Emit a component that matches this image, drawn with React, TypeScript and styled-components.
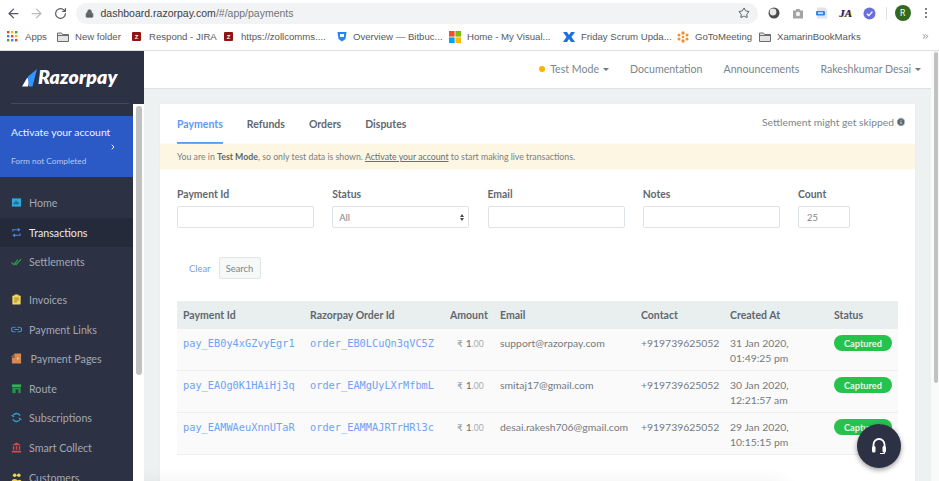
import React from "react";
import styled, { createGlobalStyle } from "styled-components";
import { ArrowLeft, ArrowRight, RotateCw, Lock, Star, ChevronRight, ChevronsRight, Info } from "lucide-react";

const Global = createGlobalStyle`
  html, body { margin: 0; padding: 0; background: #fff; overflow: hidden; }
  * { box-sizing: border-box; }
`;

const Page = styled.div`
  width: 939px; height: 481px; overflow: hidden; position: relative;
  display: flex; flex-direction: column; font-family: Lato, "Liberation Sans", sans-serif;
`;

/* ---------- browser chrome ---------- */
const Toolbar = styled.div`
  height: 25px; flex: none; display: flex; align-items: center; padding: 1px 0 0 5px; background: #fff; color: #5f6368;
`;
const NavBtn = styled.span<{ $faded?: boolean }>`
  width: 16px; height: 16px; margin-right: 7.5px; display: flex; align-items: center; justify-content: center;
  color: ${(p) => (p.$faded ? "#b8bbbf" : "#555a5f")};
`;
const UrlPill = styled.div`
  width: 682px; height: 21px; margin: 0 4px 0 0; border-radius: 11px; background: #f1f3f4;
  display: flex; align-items: center; padding: 0 8px 0 9px; font: 10.5px/1 "Liberation Sans", sans-serif;
`;
const UrlHost = styled.span`color: #3c4043; margin-left: 7px;`;
const UrlPath = styled.span`color: #70757a; flex: 1;`;
const Ext = styled.span`
  width: 24px; height: 16px; flex: none; display: flex; align-items: center; justify-content: center;
`;
const ExtText = styled.span`
  font: italic 900 11px/1 "Liberation Serif", serif; color: #1c1a8c; text-shadow: 1px 0 0 #d7b500;
`;
const Sep = styled.span`width: 1px; height: 13px; background: #dfe1e5; margin: 0 7px 0 4px;`;
const Avatar = styled.span`
  width: 16px; height: 16px; border-radius: 50%; background: #33691e; color: #fff; margin-left: 1px;
  display: flex; align-items: center; justify-content: center; font: 8.5px Roboto, sans-serif;
`;
const Dots = styled.span`
  margin-left: 14px; width: 2px; height: 10px; display: flex; flex-direction: column; justify-content: space-between;
  & i { display: block; width: 2px; height: 2px; border-radius: 50%; background: #555a5f; }
`;
const Bookmarks = styled.div`
  height: 26px; flex: none; display: flex; align-items: center; padding: 0 0 2px 7px; background: #fff;
  border-bottom: 1px solid #dcdddf; font: 9.6px/1 "Liberation Sans", sans-serif; color: #55595e;
`;
const Mark = styled.span<{ $w: number }>`
  width: ${(p) => p.$w}px; flex: none; display: flex; align-items: center; gap: 6px; white-space: nowrap;
`;
const AppsLabel = styled.span`margin-left: 1px;`;
const ZBadge = styled.span`
  width: 9px; height: 9px; margin-right: 2px; background: #8f1414; color: #fff; border-radius: 1px; flex: none;
  display: flex; align-items: center; justify-content: center; font: bold 6px "Liberation Sans", sans-serif;
`;
const More = styled.span`margin-left: auto; margin-right: 9px; color: #5f6368; display: flex;`;

/* ---------- app body ---------- */
const Body = styled.div`flex: 1; min-height: 0; display: flex; background: #eef1f2; position: relative;`;
const Sidebar = styled.aside`
  width: 144px; flex: none; display: flex; flex-direction: column; background: #fff; position: relative; z-index: 2;
`;
const LogoBlock = styled.div`
  height: 53px; flex: none; background: #2c3144; padding: 16px 11px 0; display: flex; flex-direction: column;
`;
const LogoRow = styled.div`display: flex; align-items: flex-end; padding-left: 11px; height: 20px; gap: 1px; color: #fff;`;
const LogoText = styled.span`font: italic 800 19.5px/20px Lato, sans-serif; letter-spacing: .1px;`;
const LogoRule = styled.div`width: 118px; height: 1px; margin-top: 16px; background: #444a5e;`;
const SideRow = styled.div`flex: 1; min-height: 0; display: flex;`;
const SideNav = styled.nav`width: 133px; flex: none; background: #2c3144; padding-top: 12px; overflow: hidden;`;
const Activate = styled.div`
  height: 61px; background: #2b5ac6; padding: 9px 11px 0; display: flex; flex-direction: column; color: #fff;
`;
const ActivateTitle = styled.div`font-size: 10.4px; line-height: 14px; color: #eef2fb;`;
const ActivateArrow = styled.div`height: 15px; display: flex; justify-content: flex-end; align-items: center; padding-right: 5px;`;
const ActivateSub = styled.div`font-size: 8.3px; line-height: 12px; margin-top: 1px; color: #b7c8ef;`;
const NavList = styled.div`padding-top: 11px;`;
const NavItem = styled.div<{ $active?: boolean; $gap?: boolean; $nudge?: boolean }>`
  height: 29.6px; display: flex; align-items: center; padding-left: 11px; gap: ${(p) => (p.$nudge ? 8.5 : 7)}px;
  margin-top: ${(p) => (p.$gap ? 8 : 0)}px;
  background: ${(p) => (p.$active ? "#252a3b" : "transparent")};
  color: ${(p) => (p.$active ? "#e8eaee" : "#a3a8b3")}; font-size: 10.7px; white-space: nowrap;
`;
const SideScroll = styled.div`width: 11px; flex: none; background: #fff; padding: 2px 2px 0 3px;`;
const Thumb = styled.div<{ $h: number }>`width: 100%; height: ${(p) => p.$h}px; border-radius: 4px; background: #c1c1c1;`;

const Main = styled.main`flex: 1; min-width: 0; display: flex; flex-direction: column;`;
const TopBar = styled.header`
  height: 37px; flex: none; background: #fff; box-shadow: 0 1px 1px #dfe2e5; display: flex; align-items: center;
  justify-content: flex-end; gap: 21px; padding: 0 10px 1px 0; font-size: 10.6px; color: #7b858b;
`;
const TopItem = styled.span`display: flex; align-items: center; gap: 4px; white-space: nowrap;`;
const Dot = styled.span`width: 6px; height: 6px; border-radius: 50%; background: #ffb300; margin-right: 1px;`;
const Caret = styled.span`width: 0; height: 0; border: 3px solid transparent; border-top: 3px solid #6b757b; border-bottom: 0;`;
const Card = styled.section`
  margin: 16px 16px 0; background: #fff; box-shadow: 0 0 1px #dfe2e5; flex: 1; display: flex; flex-direction: column; min-height: 0;
`;
const TabBar = styled.div`height: 40px; flex: none; display: flex; padding: 0 9px 0 17px; justify-content: space-between;`;
const Tabs = styled.div`display: flex; gap: 24px;`;
const Tab = styled.div<{ $active?: boolean }>`
  height: 40px; display: flex; align-items: center; font-size: 10.5px; font-weight: 700; padding-top: 1px;
  color: ${(p) => (p.$active ? "#5c9af5" : "#5f686f")};
  border-bottom: 2px solid ${(p) => (p.$active ? "#5c9af5" : "transparent")};
`;
const Skip = styled.div`display: flex; align-items: center; gap: 2px; font-size: 10.3px; color: #7b858b; padding-bottom: 4px;`;
const Notice = styled.div`
  height: 25px; flex: none; background: #fdf6e3; display: flex; align-items: center; padding-left: 17px;
  font-size: 8.76px; color: #7c7f7d; box-shadow: 0 0 1px #e6e3d2;
  & b { color: #5f686f; } & u { color: #6a6f70; } & span { white-space: pre; }
`;
const Form = styled.div`display: flex; gap: 18.25px; padding: 19px 0 0 17px;`;
const Field = styled.label<{ $w: number }>`width: ${(p) => p.$w}px; display: flex; flex-direction: column; flex: none;`;
const FieldLabel = styled.span`font-size: 10.4px; font-weight: 700; color: #5f686f; line-height: 13px; margin-bottom: 5px;`;
const Input = styled.div<{ $inset?: number }>`
  height: 22px; border: 1px solid #dde3e6; border-radius: 2px; background: #fff; display: flex; align-items: center;
  justify-content: space-between; padding: 0 4px 0 ${(p) => p.$inset ?? 6}px; font-size: 9.4px; color: #7b858b;
`;
const SelectArrows = styled.span`
  display: flex; flex-direction: column; gap: 1px;
  & i { display: block; width: 0; height: 0; border: 2.2px solid transparent; }
  & i:first-child { border-top: 0; border-bottom: 3px solid #44494d; }
  & i:last-child { border-bottom: 0; border-top: 3px solid #44494d; }
`;
const Actions = styled.div`display: flex; align-items: center; gap: 8px; padding: 29px 0 0 29px;`;
const ClearLink = styled.span`font-size: 9.4px; color: #6ea3f5;`;
const SearchBtn = styled.span`
  width: 42px; height: 22px; display: flex; align-items: center; justify-content: center; background: #f7f8f8;
  border: 1px solid #e2e6e8; border-radius: 2px; font-size: 9.4px; color: #7b858b;
`;
const Table = styled.div`margin: 22px 17px 0; display: flex; flex-direction: column;`;
const Row = styled.div<{ $head?: boolean }>`
  display: grid; grid-template-columns: 127px 140px 50px 141px 89px 104px 70px; height: ${(p) => (p.$head ? 28 : 42)}px;
  background: ${(p) => (p.$head ? "#e9eeef" : "#fafafa")};
  border-bottom: ${(p) => (p.$head ? "0" : "1px solid #eceeef")};
  font-size: ${(p) => (p.$head ? "10.5px" : "10.4px")};
  color: ${(p) => (p.$head ? "#5f686f" : "#73797e")};
  font-weight: ${(p) => (p.$head ? 700 : 400)};
  align-items: ${(p) => (p.$head ? "center" : "start")};
  padding-top: ${(p) => (p.$head ? 0 : 7)}px;
`;
const Cell = styled.div`padding-left: 6px; line-height: 15px; white-space: nowrap;`;
const MonoCell = styled(Cell)`font: 10.3px/15px "DejaVu Sans Mono", monospace; color: #6ea2f6;`;
const AmountCell = styled(Cell)`padding-left: 13px; color: #6b7176;`;
const Rupee = styled.span`font-family: "DejaVu Sans", sans-serif; font-size: 9px; color: #8a9095; margin-right: 3px;`;
const Cents = styled.span`font-size: 8.5px; color: #a4a9ad;`;
const Badge = styled.span`
  width: 58px; height: 16px; border-radius: 8px; background: #27c24c; color: #e4f8e9; margin: -1px 0 0 6px;
  display: flex; align-items: center; justify-content: center; font-size: 9.2px; font-weight: 700;
`;
const RightScroll = styled.div`width: 8px; flex: none; background: #fafafa; padding: 1px 1px 0 3px;`;
const BottomGlow = styled.div`
  position: absolute; left: 120px; width: 660px; top: 441px; height: 40px; z-index: 1;
  box-shadow: 0 0 22px 4px rgba(0, 0, 0, .12);
`;
const Chat = styled.div`
  position: absolute; left: 857px; top: 424px; width: 44px; height: 44px; border-radius: 50%; background: #2c3144;
  display: flex; align-items: center; justify-content: center; color: #fff; z-index: 3;
  box-shadow: 0 2px 5px rgba(0, 0, 0, .4);
`;
const NavIcon = styled.svg`flex: none;`;

const I = ({ children }: { children: React.ReactNode }) => (
  <NavIcon width="11" height="11" viewBox="0 0 12 12">{children}</NavIcon>
);

const navItems: [string, React.ReactNode, boolean?, boolean?, boolean?][] = [
  ["Home", <I><rect x="1" y="1.5" width="10" height="9" fill="#2fa8dc" /><path d="M3.5 8V6M5.5 8V4M7.5 8V5.5" stroke="#173a52" strokeWidth="1" /></I>],
  ["Transactions", <I><path d="M2 5V3h7M7.5 1.5 9.5 3l-2 1.5M10 7v2H3M4.5 7.5 2.5 9l2 1.5" stroke="#4d84e0" strokeWidth="1.2" fill="none" /></I>, true],
  ["Settlements", <I><path d="M0.5 7 3 9.5 7.5 4M4.5 8.5 5.5 9.5 11 3.5" stroke="#25a54a" strokeWidth="1.2" fill="none" /></I>],
  ["Invoices", <I><rect x="1.5" y="1.5" width="9" height="10" rx="1" fill="#f2d75c" /><path d="M3.5 4.5h5M3.5 6.5h5M3.5 8.5h3" stroke="#7a6a20" strokeWidth=".8" /><rect x="4" y=".5" width="4" height="2" fill="#f2d75c" /></I>, false, true],
  ["Payment Links", <I><path d="M5 3.5H3a2.5 2.5 0 0 0 0 5h2M7 3.5h2a2.5 2.5 0 0 1 0 5H7M3.5 6h5" stroke="#4d84e0" strokeWidth="1.2" fill="none" /></I>],
  ["Payment Pages", <I><path d="M4 .5h7v11H1V3.5z" fill="#d68a52" /><path d="M1 3.5 4 .5v5H1z" fill="#8d5f42" /><circle cx="7.5" cy="6" r="1" fill="#fff" opacity=".6" /></I>, false, false, true],
  ["Route", <I><path d="M1 1.5h10v3H1z" fill="#2cb457" /><path d="M1.5 5h9v6h-9z" fill="#1d9a47" /><rect x="5" y="7" width="3" height="4" fill="#2c3144" /></I>],
  ["Subscriptions", <I><path d="M10 4A4.5 4.5 0 0 0 2.2 3.8M2 8a4.500 4.500 0 0 0 7.800.2" stroke="#2f9fd0" strokeWidth="1.4" fill="none" /><path d="M.5 3.500 3.500 5.500M11.500 8.500 8.500 6.500" stroke="#2f9fd0" strokeWidth="1.2" /></I>],
  ["Smart Collect", <I><path d="M6 .5 11 3.5H1z" fill="#e0464c" /><path d="M2 4.500h1.500v4H2zM5.200 4.500h1.600v4H5.200zM8.500 4.500H10v4H8.500zM1 9.500h10v2H1z" fill="#e0464c" /></I>],
  ["Customers", <I><circle cx="4" cy="3.500" r="2" fill="#f0d44a" /><circle cx="8.500" cy="3.500" r="2" fill="#f0d44a" /><path d="M.5 11a3.500 3.500 0 0 1 7 0zM6 11a3 3 0 0 1 5.500-1v1z" fill="#f0d44a" /></I>],
];

const rows = [
  ["pay_EB0y4xGZvyEgr1", "order_EB0LCuQn3qVC5Z", "support@razorpay.com", "31 Jan 2020,", "01:49:25 pm"],
  ["pay_EAOg0K1HAiHj3q", "order_EAMgUyLXrMfbmL", "smitaj17@gmail.com", "30 Jan 2020,", "12:21:57 am"],
  ["pay_EAMWAeuXnnUTaR", "order_EAMMAJRTrHRl3c", "desai.rakesh706@gmail.com", "29 Jan 2020,", "10:15:15 pm"],
];

const Folder = () => (
  <svg width="12" height="10" viewBox="0 0 12 10"><path d="M.5 1h4l1 1.500h6V9.500H.5z" fill="#e4e4e4" stroke="#6d6d6d" /><path d="M.5 3.500h11" stroke="#6d6d6d" /></svg>
);

export default function App() {
  return (
    <Page>
      <Global />
      <Toolbar>
        <NavBtn><ArrowLeft size={15} /></NavBtn>
        <NavBtn $faded><ArrowRight size={15} /></NavBtn>
        <NavBtn><RotateCw size={13} strokeWidth={2.2} /></NavBtn>
        <UrlPill>
          <Lock size={9} fill="#5f6368" color="#5f6368" />
          <UrlHost>dashboard.razorpay.com</UrlHost>
          <UrlPath>/#/app/payments</UrlPath>
          <Star size={12} color="#555a5f" />
        </UrlPill>
        <Ext>
          <svg width="12" height="12" viewBox="0 0 12 12"><circle cx="6" cy="6" r="5.500" fill="#4a4a4a" /><circle cx="5" cy="5" r="3.400" fill="#e8e8e8" /></svg>
        </Ext>
        <Ext>
          <svg width="12" height="11" viewBox="0 0 12 11"><path d="M1 2.500h2.500L4.500 1h3l1 1.500H11v8H1z" fill="#a3a3a3" /><circle cx="6" cy="6" r="2.200" fill="#f2f2f2" /></svg>
        </Ext>
        <Ext>
          <svg width="13" height="12" viewBox="0 0 13 12"><path d="M2 .5h8l2 2v9H2z" fill="#dbe5f5" /><rect x="1" y="4" width="9" height="4.500" rx="1" fill="#3b82dc" /><rect x="3" y="5.300" width="5" height="1.600" fill="#dbe9fb" /></svg>
        </Ext>
        <Ext><ExtText>JA</ExtText></Ext>
        <Ext>
          <svg width="13" height="13" viewBox="0 0 13 13"><circle cx="6.500" cy="6.500" r="6" fill="#6b6fd8" /><path d="M3.800 6.800 5.800 8.600 9.400 4.600" stroke="#fff" strokeWidth="1.300" fill="none" /></svg>
        </Ext>
        <Sep />
        <Avatar>R</Avatar>
        <Dots><i /><i /><i /></Dots>
      </Toolbar>
      <Bookmarks>
        <Mark $w={50}>
          <svg width="11" height="11" viewBox="0 0 11 11">
            {[0, 1, 2].flatMap((r) => [0, 1, 2].map((c) => (
              <rect key={`${r}${c}`} x={c * 4} y={r * 4} width="2.400" height="2.400"
                fill={["#e94235", "#fbbc04", "#34a853", "#4285f4", "#e94235", "#fbbc04", "#34a853", "#4285f4", "#e94235"][r * 3 + c]} />
            )))}
          </svg>
          <AppsLabel>Apps</AppsLabel>
        </Mark>
        <Mark $w={75}><Folder />New folder</Mark>
        <Mark $w={92}><ZBadge>Z</ZBadge>Respond - JIRA</Mark>
        <Mark $w={113}><ZBadge>Z</ZBadge>https://zollcomms....</Mark>
        <Mark $w={112}>
          <svg width="10" height="11" viewBox="0 0 10 11"><path d="M.5 1h9l-1 7L5 10.500 1.500 8z" fill="#2684ff" /><rect x="3" y="3" width="4" height="3" fill="#fff" /></svg>
          Overview — Bitbuc...
        </Mark>
        <Mark $w={114}>
          <svg width="12" height="12" viewBox="0 0 12 12"><rect width="5.600" height="5.600" fill="#f25022" /><rect x="6.400" width="5.600" height="5.600" fill="#7fba00" /><rect y="6.400" width="5.600" height="5.600" fill="#00a4ef" /><rect x="6.400" y="6.400" width="5.600" height="5.600" fill="#ffb900" /></svg>
          Home - My Visual...
        </Mark>
        <Mark $w={114}>
          <svg width="12" height="12" viewBox="0 0 12 12"><path d="M0 1h4l2 3 2-3h4L8.500 6 12 11H8L6 8l-2 3H0l3.500-5z" fill="#1f6fe0" /></svg>
          Friday Scrum Upda...
        </Mark>
        <Mark $w={82}>
          <svg width="12" height="12" viewBox="0 0 12 12" fill="#f68d2e"><circle cx="6" cy="2" r="1.700" /><circle cx="6" cy="10" r="1.700" /><circle cx="2" cy="4" r="1.500" /><circle cx="10" cy="4" r="1.500" /><circle cx="2" cy="8" r="1.500" /><circle cx="10" cy="8" r="1.500" /><circle cx="6" cy="6" r="1.200" /></svg>
          GoToMeeting
        </Mark>
        <Mark $w={110}><Folder />XamarinBookMarks</Mark>
        <More><ChevronsRight size={9} /></More>
      </Bookmarks>
      <Body>
        <Sidebar>
          <LogoBlock>
            <LogoRow>
              <svg width="15" height="18" viewBox="0 0 15 18">
                <path d="M0 17.500 5 9h3l-2 8.500z" fill="#fff" />
                <path d="M5.500 8 15 0 10.500 17.500H7z" fill="#3395ff" />
              </svg>
              <LogoText>Razorpay</LogoText>
            </LogoRow>
            <LogoRule />
          </LogoBlock>
          <SideRow>
            <SideNav>
              <Activate>
                <ActivateTitle>Activate your account</ActivateTitle>
                <ActivateArrow><ChevronRight size={8} strokeWidth={3} /></ActivateArrow>
                <ActivateSub>Form not Completed</ActivateSub>
              </Activate>
              <NavList>
                {navItems.map(([label, icon, active, gap, nudge]) => (
                  <NavItem key={label} $active={active} $gap={gap} $nudge={nudge}>{icon}{label}</NavItem>
                ))}
              </NavList>
            </SideNav>
            <SideScroll><Thumb $h={269} /></SideScroll>
          </SideRow>
        </Sidebar>
        <BottomGlow />
        <Main>
          <TopBar>
            <TopItem><Dot />Test Mode<Caret /></TopItem>
            <TopItem>Documentation</TopItem>
            <TopItem>Announcements</TopItem>
            <TopItem>Rakeshkumar Desai<Caret /></TopItem>
          </TopBar>
          <Card>
            <TabBar>
              <Tabs>
                <Tab $active>Payments</Tab>
                <Tab>Refunds</Tab>
                <Tab>Orders</Tab>
                <Tab>Disputes</Tab>
              </Tabs>
              <Skip>
                Settlement might get skipped
                <Info size={10} fill="#5f686f" color="#fff" />
              </Skip>
            </TabBar>
            <Notice>
              <span>You are in <b>Test Mode</b>, so only test data is shown. <u>Activate your account</u> to start making live transactions.</span>
            </Notice>
            <Form>
              <Field $w={137}><FieldLabel>Payment Id</FieldLabel><Input /></Field>
              <Field $w={137}><FieldLabel>Status</FieldLabel><Input>All<SelectArrows><i /><i /></SelectArrows></Input></Field>
              <Field $w={137}><FieldLabel>Email</FieldLabel><Input /></Field>
              <Field $w={137}><FieldLabel>Notes</FieldLabel><Input /></Field>
              <Field $w={52}><FieldLabel>Count</FieldLabel><Input $inset={8}>25</Input></Field>
            </Form>
            <Actions>
              <ClearLink>Clear</ClearLink>
              <SearchBtn>Search</SearchBtn>
            </Actions>
            <Table>
              <Row $head>
                <Cell>Payment Id</Cell><Cell>Razorpay Order Id</Cell><Cell>Amount</Cell><Cell>Email</Cell>
                <Cell>Contact</Cell><Cell>Created At</Cell><Cell>Status</Cell>
              </Row>
              {rows.map((r) => (
                <Row key={r[0]}>
                  <MonoCell>{r[0]}</MonoCell>
                  <MonoCell>{r[1]}</MonoCell>
                  <AmountCell><Rupee>₹</Rupee>1<Cents>.00</Cents></AmountCell>
                  <Cell>{r[2]}</Cell>
                  <Cell>+919739625052</Cell>
                  <Cell>{r[3]}<br />{r[4]}</Cell>
                  <Badge>Captured</Badge>
                </Row>
              ))}
            </Table>
          </Card>
        </Main>
        <RightScroll><Thumb $h={331} /></RightScroll>
      </Body>
      <Chat>
        <svg width="16" height="19" viewBox="0 0 16 19">
          <path d="M2.500 10V7.500a5.500 5.500 0 0 1 11 0V10" stroke="#fff" strokeWidth="1.800" fill="none" />
          <rect x="1" y="9" width="3.500" height="6.500" rx="1.500" fill="#fff" />
          <rect x="11.500" y="9" width="3.500" height="6.500" rx="1.500" fill="#fff" />
          <path d="M13.500 15v1.500H9" stroke="#fff" strokeWidth="1" fill="none" />
        </svg>
      </Chat>
    </Page>
  );
}
